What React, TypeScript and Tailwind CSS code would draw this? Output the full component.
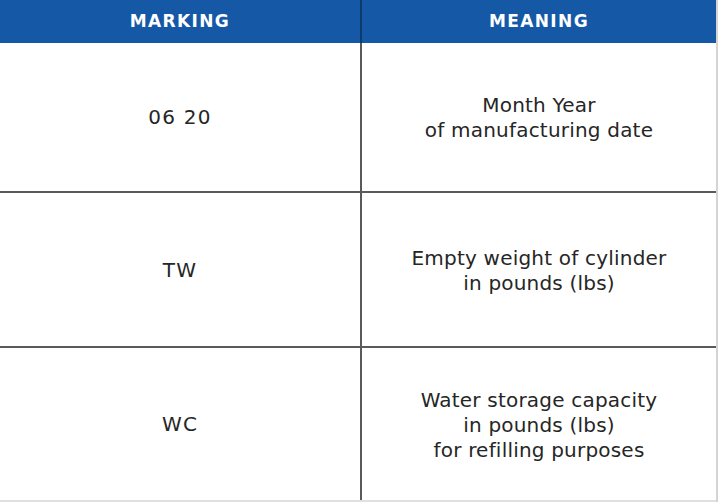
import React from 'react';

const rows = [
  { mark: '06 20', meaning: ['Month Year', 'of manufacturing date'], h: 'h-[150px]' },
  { mark: 'TW', meaning: ['Empty weight of cylinder', 'in pounds (lbs)'], h: 'h-[155px]' },
  { mark: 'WC', meaning: ['Water storage capacity', 'in pounds (lbs)', 'for refilling purposes'], h: 'h-[154px]' },
];

export default function App() {
  return (
    <div
      className="w-[720px] h-[504px] bg-white overflow-hidden text-[#262626]"
      style={{ fontFamily: '"DejaVu Sans", "Liberation Sans", sans-serif' }}
    >
      <div className="w-[718px] border-r-2 border-[#d4d4d4]">
        <div className="flex h-[43px] bg-[#1458a6] text-white font-bold text-[17px] tracking-[0.08em]">
          <div className="w-[362px] flex items-center justify-center border-r-2 border-[#0c3a6e] pt-[1px]">MARKING</div>
          <div className="flex-1 flex items-center justify-center pt-[1px]">MEANING</div>
        </div>
        {rows.map((r, i) => (
          <div
            key={r.mark}
            className={`flex ${r.h} ${i < rows.length - 1 ? 'border-b-2 border-[#5a5a5a]' : 'border-b-2 border-[#e0e0e0]'}`}
          >
            <div className="w-[362px] flex items-center justify-center border-r-2 border-[#5a5a5a] text-[20px] tracking-[0.06em]">
              {r.mark}
            </div>
            <div className="flex-1 flex flex-col items-center justify-center text-[20px] leading-[25px] tracking-[0.01em] text-center pt-[2px]">
              {r.meaning.map((m) => (
                <div key={m}>{m}</div>
              ))}
            </div>
          </div>
        ))}
      </div>
    </div>
  );
}
